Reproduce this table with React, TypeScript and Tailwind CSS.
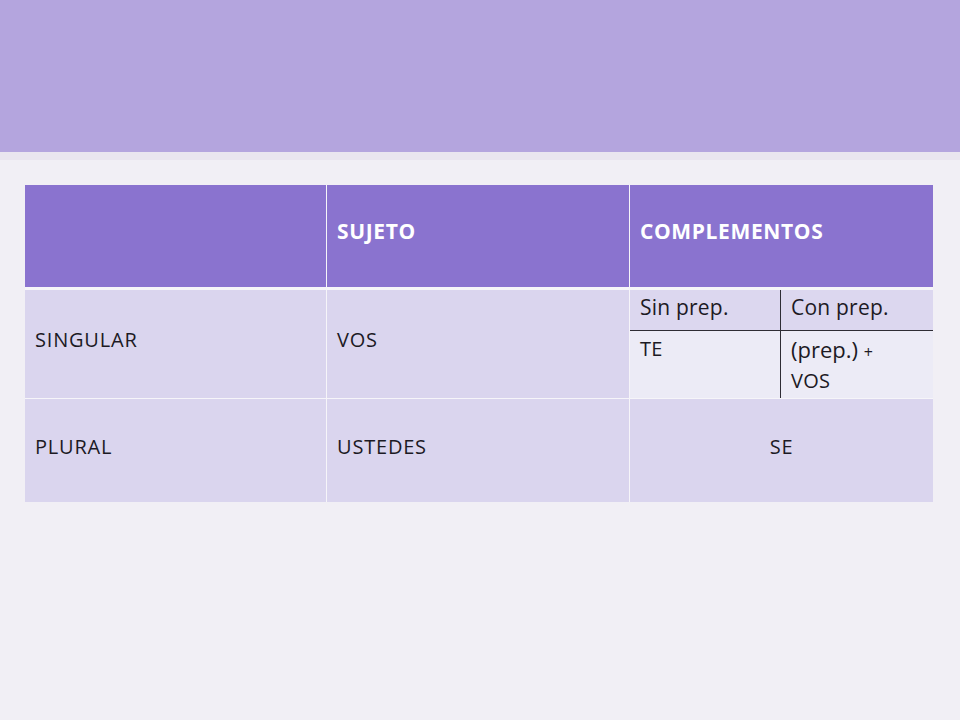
import React from "react";

const FONT = { fontFamily: "'Open Sans', Lato, sans-serif" };

function Cell({
  children,
  className = "",
}: {
  children?: React.ReactNode;
  className?: string;
}) {
  return (
    <div className={`flex items-center pl-[10px] pb-[8px] ${className}`}>
      {children}
    </div>
  );
}

export default function App() {
  return (
    <div className="w-[960px] h-[720px] bg-[#f1eff5] overflow-hidden" style={FONT}>
      {/* top banner */}
      <div className="h-[152px] bg-[#b4a5de]" />
      <div className="h-[8px] bg-[#e9e5ef]" />

      {/* table */}
      <div className="ml-[25px] mt-[25px] w-[908px] flex flex-col bg-[#f6f5f9] text-[20px] tracking-[0.04em] text-[#1c1a24]">
        <div className="flex gap-px h-[102px] mb-[3px] text-[21px] font-bold text-white tracking-[0.03em]">
          <div className="w-[301px] bg-[#8a73cf]" />
          <Cell className="w-[302px] bg-[#8a73cf] pb-[6px]">SUJETO</Cell>
          <Cell className="w-[303px] bg-[#8a73cf] pb-[6px]">COMPLEMENTOS</Cell>
        </div>

        <div className="flex gap-px h-[108px] mb-px">
          <Cell className="w-[301px] bg-[#dad5ee]">SINGULAR</Cell>
          <Cell className="w-[302px] bg-[#dad5ee]">VOS</Cell>
          <div className="w-[303px] grid grid-cols-[151px_152px] grid-rows-[41px_67px] text-[21px] tracking-[0.01em]">
            <div className="bg-[#dcd7ef] border-r border-b border-[#2e2c34] pl-[10px] pt-[2px]">
              Sin prep.
            </div>
            <div className="bg-[#dcd7ef] border-b border-[#2e2c34] pl-[10px] pt-[2px]">
              Con prep.
            </div>
            <div className="bg-[#ecebf6] border-r border-[#2e2c34] pl-[10px] pt-[3px] text-[20px]">
              TE
            </div>
            <div className="bg-[#ecebf6] pl-[10px] pt-[4px] leading-[28px]">
              <span className="text-[22px] tracking-normal">(prep.)</span>{" "}
              <span className="text-[16px]">+</span>
              <br />
              <span className="text-[20px]">VOS</span>
            </div>
          </div>
        </div>

        <div className="flex gap-px h-[103px]">
          <Cell className="w-[301px] bg-[#dad5ee]">PLURAL</Cell>
          <Cell className="w-[302px] bg-[#dad5ee]">USTEDES</Cell>
          <div className="w-[303px] bg-[#dad5ee] flex items-center justify-center pb-[8px]">
            SE
          </div>
        </div>
      </div>
    </div>
  );
}
